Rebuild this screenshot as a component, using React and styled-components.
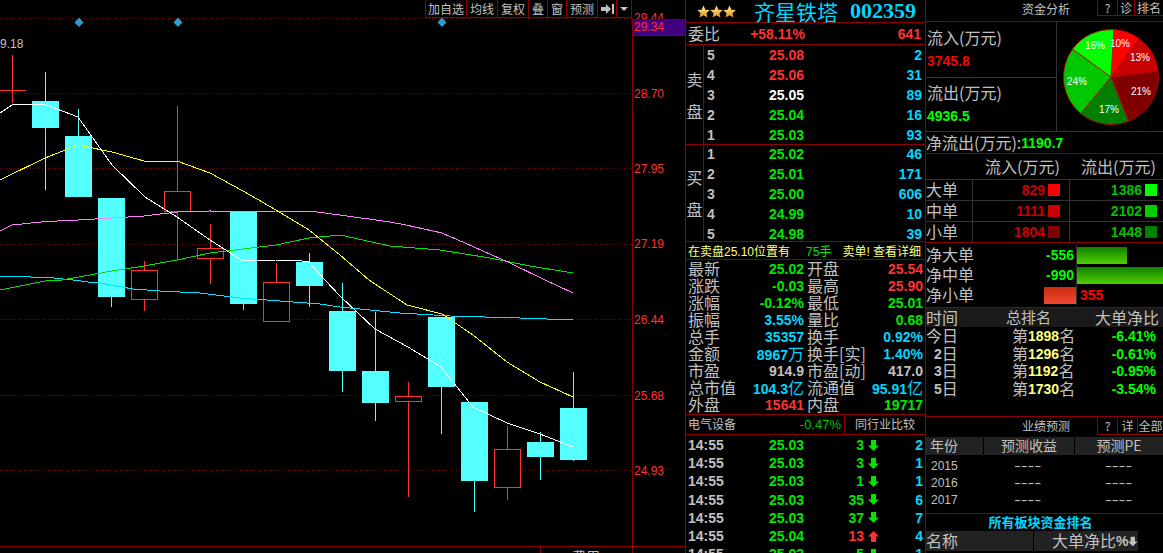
import React from "react";
import styled, { createGlobalStyle } from "styled-components";

const RED_LINE = "#8b0000";
const DIM_LINE = "#333333";
const GRAY = "#c0c0c0";
const COLORS = { red: "#ff3232", green: "#00e600", cyan: "#00d7ff", white: "#ffffff", gray: "#c0c0c0", pure: "#00ff00", yellow: "#ffff80", deep: "#cc0000", mid: "#00c000", bright: "#ff0000" };

const Global = createGlobalStyle`
  html, body { margin: 0; padding: 0; background: #000; }
  body { font-family: "Liberation Sans", "Noto Sans CJK SC", sans-serif; color: ${GRAY}; }
`;
const Page = styled.div`display:flex;width:1163px;height:553px;overflow:hidden;background:#000;`;
const ChartColumn = styled.div`position:relative;width:685px;flex:none;border-right:1px solid ${RED_LINE};display:flex;flex-direction:column;`;
const ChartSvg = styled.svg`display:block;flex:none;polyline,rect,line{shape-rendering:crispEdges;}`;
const Strip = styled.div`display:flex;height:6px;border-top:1px solid ${RED_LINE};overflow:hidden;flex:none;`;
const StripCell = styled.div`width:${p => p.$w}px;flex:none;border-right:1px solid ${RED_LINE};box-sizing:border-box;padding:2px 0 0 ${p => p.$pad || 0}px;font-size:14px;line-height:16px;color:${GRAY};white-space:nowrap;`;
const Toolbar = styled.div`position:absolute;top:0;left:425px;height:17px;display:flex;border:1px solid ${RED_LINE};border-top:0;`;
const ToolButton = styled.div`width:${p => p.$w}px;box-sizing:border-box;border-right:1px solid ${RED_LINE};font-size:12px;line-height:16px;text-align:center;color:${GRAY};display:flex;align-items:center;justify-content:center;white-space:nowrap;font-family:"Noto Sans CJK SC",sans-serif;&:last-child{border-right:0;}`;
const PriceTag = styled.div`position:absolute;left:633px;top:19px;width:52px;height:17px;box-sizing:border-box;background:#400080;border-bottom:1px solid ${RED_LINE};color:#ff3232;font-size:12px;line-height:17px;padding-left:1px;`;

const Mid = styled.div`width:239px;flex:none;border-right:1px solid ${RED_LINE};display:flex;flex-direction:column;overflow:hidden;`;
const Section = styled.div`height:${p => p.$h}px;flex:none;box-sizing:content-box;border-bottom:1px solid ${RED_LINE};`;
const TitleBar = styled(Section)`display:flex;align-items:center;padding-left:11px;`;
const Stars = styled.div`display:flex;width:57px;flex:none;`;
const Title = styled.div`font-size:22px;font-weight:700;color:#00d7ff;font-family:"Liberation Serif","Noto Sans CJK SC",serif;white-space:nowrap;line-height:22px;display:flex;gap:12px;`;
const TitleName = styled.span`font-family:"Noto Sans CJK SC",sans-serif;font-weight:400;font-size:21px;`;
const Unit = styled.span`font-family:"Noto Sans CJK SC",sans-serif;font-weight:400;font-size:16px;`;
const Ratio = styled(Section)`display:flex;align-items:center;padding:0 4px 0 2px;`;
const Label = styled.span`font-size:${p => p.$s || 16}px;font-weight:400;color:${GRAY};white-space:nowrap;font-family:"Noto Sans CJK SC",sans-serif;line-height:16px;margin-top:-2px;`;
const Num = styled.span`font-size:14px;font-weight:700;color:${p => COLORS[p.$c] || GRAY};white-space:nowrap;line-height:16px;`;
const RatioValue = styled(Num)`width:85px;text-align:right;`;
const RatioEnd = styled(Num)`margin-left:auto;`;
const Book = styled(Section)`display:flex;`;
const SideLabel = styled.div`width:17px;flex:none;border-right:1px solid ${RED_LINE};display:flex;flex-direction:column;align-items:center;justify-content:center;gap:16px;font-size:16px;font-family:"Noto Sans CJK SC",sans-serif;line-height:16px;`;
const BookRows = styled.div`flex:1;margin-top:${p => p.$top || 0}px;`;
const BookRow = styled.div`height:20px;display:flex;align-items:center;padding-right:3px;`;
const Level = styled(Num)`width:20px;padding-left:3px;box-sizing:border-box;flex:none;`;
const Price = styled(Num)`width:80px;text-align:right;flex:none;`;
const Volume = styled(Num)`margin-left:auto;`;
const Notice = styled(Section)`display:flex;align-items:center;padding-left:2px;font-size:12px;color:#ffff80;white-space:nowrap;font-family:"Liberation Sans","Noto Sans CJK SC",sans-serif;`;
const NoticeGreen = styled.span`color:#00e600;margin-left:16px;`;
const NoticeEnd = styled.span`margin-left:11px;`;
const Stats = styled(Section)`display:flex;flex-direction:column;`;
const StatRow = styled.div`height:17px;display:grid;grid-template-columns:116px 116px;column-gap:3px;padding-left:2px;align-items:center;`;
const StatCell = styled.div`display:flex;justify-content:space-between;align-items:center;`;
const Industry = styled(Section)`display:flex;align-items:center;`;
const IndustryLeft = styled.div`width:159px;box-sizing:border-box;height:100%;border-right:1px solid ${RED_LINE};display:flex;align-items:center;justify-content:space-between;padding:0 3px 0 2px;`;
const IndustryDelta = styled.span`font-size:13px;color:#00c000;`;
const IndustryRight = styled.div`flex:1;display:flex;justify-content:center;align-items:center;`;
const TradeList = styled.div`padding-top:1px;`;
const TradeRow = styled.div`height:18.2px;display:flex;align-items:center;padding-left:2px;`;
const TradeTime = styled(Num)`width:40px;flex:none;`;
const TradePrice = styled(Num)`width:76px;text-align:right;flex:none;`;
const TradeVol = styled(Num)`width:60px;text-align:right;flex:none;`;
const TradeArrow = styled.svg`margin-left:4px;flex:none;`;
const TradeCount = styled(Num)`margin-left:auto;padding-right:2px;`;

const Right = styled.div`flex:1;min-width:0;display:flex;flex-direction:column;overflow:hidden;`;
const PanelHead = styled.div`height:${p => p.$h}px;flex:none;border-bottom:1px solid ${RED_LINE};display:flex;justify-content:flex-end;position:relative;`;
const PanelTitle = styled.div`position:absolute;left:96px;top:0;line-height:${p => p.$h}px;font-size:12px;color:${GRAY};font-family:"Noto Sans CJK SC",sans-serif;`;
const PanelButtons = styled.div`display:flex;height:${p => p.$h}px;border-left:1px solid ${RED_LINE};border-bottom:1px solid ${RED_LINE};box-sizing:border-box;`;
const PanelButton = styled.div`width:${p => p.$w}px;box-sizing:border-box;border-right:1px solid ${RED_LINE};font-size:12px;display:flex;align-items:center;justify-content:center;white-space:nowrap;font-family:"Noto Sans CJK SC",sans-serif;overflow:hidden;&:last-child{border-right:0;}`;
const FlowTop = styled.div`height:109px;flex:none;display:flex;border-bottom:1px solid ${DIM_LINE};`;
const FlowLeft = styled.div`width:130px;flex:none;border-right:1px solid ${DIM_LINE};display:flex;flex-direction:column;`;
const FlowBlock = styled.div`flex:1;padding:9px 0 0 1px;display:flex;flex-direction:column;gap:8px;& + &{border-top:1px solid ${DIM_LINE};padding-top:8px;}`;
const PieWrap = styled.div`flex:1;display:flex;align-items:center;padding-left:5px;`;
const NetOut = styled.div`height:21px;flex:none;display:flex;align-items:center;border-bottom:1px solid ${RED_LINE};`;
const FlowHead = styled.div`height:25px;flex:none;display:grid;grid-template-columns:59px 96px 1fr;align-items:center;border-bottom:1px solid ${DIM_LINE};`;
const FlowRow = styled.div`height:20px;flex:none;display:grid;grid-template-columns:47px 97px 1fr;border-bottom:1px solid ${p => p.$last ? RED_LINE : DIM_LINE};align-items:stretch;`;
const FlowCell = styled.div`display:flex;align-items:center;justify-content:${p => p.$end ? "flex-end" : "flex-start"};gap:2px;border-right:1px solid ${p => p.$nb ? "transparent" : DIM_LINE};padding-right:${p => p.$pr || 0}px;`;
const Swatch = styled.i`display:block;width:12px;height:12px;background:${p => p.$c};`;
const FlowNum = styled(Num)`color:${p => p.$col};margin-right:1px;`;
const Net = styled.div`height:64px;flex:none;border-bottom:1px solid ${RED_LINE};display:flex;flex-direction:column;`;
const NetRow = styled.div`height:20px;display:grid;grid-template-columns:150px 1fr;margin-top:${p => p.$top || 0}px;`;
const NetLeft = styled.div`display:flex;align-items:center;`;
const NetValue = styled(Num)`margin-left:auto;padding-right:2px;color:#00ff00;`;
const NetRight = styled.div`border-left:1px solid ${DIM_LINE};display:flex;align-items:center;`;
const Bar = styled.div`height:17px;width:${p => p.$w}px;background:${p => p.$red ? "linear-gradient(#c82a10,#f04a30)" : "linear-gradient(#108000,#50d000)"};flex:none;margin-left:${p => p.$auto ? "auto" : "0"};`;
const NetExtra = styled(Num)`color:#ff0000;margin-left:3px;`;
const RankHead = styled.div`height:19px;flex:none;background:#1a1a1a;display:grid;grid-template-columns:80px 89px 1fr;align-items:center;`;
const Rank = styled.div`height:89px;flex:none;border-bottom:1px solid ${RED_LINE};`;
const RankRow = styled.div`height:17.8px;display:grid;grid-template-columns:86px 63px 81px;align-items:center;`;
const RankDay = styled.div`padding-left:${p => p.$pad || 0}px;display:flex;align-items:center;`;
const RankPos = styled.div`display:flex;align-items:center;`;
const Pct = styled(Num)`text-align:right;color:#00ff00;`;
const Forecast = styled.div`height:17px;flex:none;position:relative;display:flex;justify-content:flex-end;`;
const GreyTable = styled.div`display:grid;grid-template-columns:${p => p.$cols};gap:1px;margin-top:${p => p.$top || 0}px;flex:none;height:${p => p.$h}px;`;
const GreyCell = styled.div`background:#222;display:flex;align-items:center;justify-content:${p => p.$left ? "flex-start" : "center"};padding-left:${p => p.$pad || 0}px;`;
const ForecastRows = styled.div`height:59px;flex:none;border-bottom:1px solid ${RED_LINE};padding-top:2px;box-sizing:border-box;`;
const ForecastRow = styled.div`height:17px;display:grid;grid-template-columns:83px 91px 1fr;padding-left:5px;align-items:center;font-size:12px;color:${GRAY};`;
const Dashes = styled.span`display:inline-block;transform:scaleX(1.7);transform-origin:left center;`;
const AllTitle = styled.div`height:17px;flex:none;text-align:center;padding-right:8px;font-size:13px;line-height:15px;font-weight:700;color:#00d7ff;font-family:"Noto Sans CJK SC",sans-serif;`;

const candles = [
  { x: 45, t: 72, b: 190, y: 101, h: 27, k: "c" }, { x: 78, t: 109, b: 136, y: 136, h: 61, k: "c" },
  { x: 111, t: 198, b: 307, y: 198, h: 99, k: "c" }, { x: 144, t: 261, b: 311, y: 270, h: 29, k: "r" },
  { x: 177, t: 106, b: 259, y: 191, h: 20, k: "r" }, { x: 210, t: 224, b: 284, y: 248, h: 10, k: "r" },
  { x: 243, t: 212, b: 310, y: 212, h: 92, k: "c" }, { x: 276, t: 263, b: 321, y: 282, h: 39, k: "r" },
  { x: 309, t: 253, b: 307, y: 262, h: 24, k: "c" }, { x: 342, t: 283, b: 392, y: 311, h: 60, k: "c" },
  { x: 375, t: 312, b: 421, y: 371, h: 32, k: "c" }, { x: 408, t: 382, b: 497, y: 396, h: 5, k: "r" },
  { x: 441, t: 317, b: 434, y: 317, h: 70, k: "c" }, { x: 474, t: 402, b: 512, y: 402, h: 79, k: "c" },
  { x: 507, t: 426, b: 500, y: 449, h: 38, k: "r" }, { x: 540, t: 432, b: 480, y: 442, h: 15, k: "c" },
  { x: 573, t: 372, b: 461, y: 408, h: 52, k: "c" },
];
const lines = [
  ["#00e5ff", "0,276 50,277.6 73,280 88,282 100,283 133,289 160,291 200,293 240,298 280,301 320,304 340,307 400,313 450,316 520,318 573,320"],
  ["#00e600", "0,290 50,280 62,280 112,271 144,266 177,260 210,253 243,249 276,245 309,238 340,235 390,246 440,250 490,258 530,266 573,273"],
  ["#ff80ff", "0,231 12,225 45,221.6 78,220 112,218 144,216 177,212 210,211 243,212 276,211 309,211 340,215 390,222 406,225 442,233 465,243 510,263 545,280 573,293"],
  ["#ffff00", "0,180 45,158 78,145 112,152 144,161 177,161 210,173 243,191 276,210 309,230 340,255 369,280 407,305 442,314 473,335 507,362 540,382 573,397"],
  ["#ffffff", "0,113 12,105 45,104.5 78,117 112,165 145,197 177,217 210,240 243,261 276,260 294,260 309,262 325,280 340,296 375,329 408,347 441,367 473,407 507,423 540,434 573,447"],
];
const gridY = [18, 93, 168, 244, 319, 395, 470];
const axis = [["29.44", 22], ["28.70", 98], ["27.95", 173], ["27.19", 248], ["26.44", 324], ["25.68", 400], ["24.93", 475]];
const diamonds = [79, 178, 442];

function Chart() {
  return (
    <ChartSvg width="685" height="546" viewBox="0 0 685 546">
      {gridY.map(y => <line key={y} x1="0" x2="632" y1={y + 0.5} y2={y + 0.5} stroke="#800000" strokeDasharray="1 2" />)}
      <line x1="632.5" x2="632.5" y1="18" y2="546" stroke={RED_LINE} />
      {diamonds.map(x => <polygon key={x} points={`${x},17.5 ${x + 4.5},22.5 ${x},27 ${x - 4.5},22.5`} fill="#3399cc" />)}
      <text x="0" y="48" fontSize="12" fill={GRAY}>9.18</text>
      <line x1="12.5" x2="12.5" y1="55" y2="103" stroke="#ff3232" />
      <line x1="0" x2="26" y1="90.5" y2="90.5" stroke="#ff3232" />
      {candles.map(c => {
        const col = c.k === "c" ? "#54ffff" : "#ff3232";
        return (
          <g key={c.x}>
            <line x1={c.x + 0.5} x2={c.x + 0.5} y1={c.t} y2={c.b} stroke={col} />
            <rect x={c.x - 13} y={c.y} width="27" height={c.k === "c" ? c.h : c.h + 1} fill={col} />
            {c.k === "r" && <rect x={c.x - 12} y={c.y + 1} width="25" height={c.h - 1} fill="#000" />}
          </g>
        );
      })}
      {lines.map(([c, p]) => <polyline key={c} points={p} fill="none" stroke={c} strokeWidth="1" />)}
      {axis.map(([t, y]) => <text key={t} x="634" y={y} fontSize="12" fill="#ff3232">{t}</text>)}
    </ChartSvg>
  );
}

const Star = () => (
  <svg width="13" height="13" viewBox="0 0 24 24"><defs><linearGradient id="st" x1="0" y1="0" x2="0" y2="1"><stop offset="0" stopColor="#ffe9a0" /><stop offset="1" stopColor="#e09a20" /></linearGradient></defs><polygon points="12,1 15.5,8.6 23.5,9.4 17.5,15 19.2,23 12,18.8 4.8,23 6.5,15 .5,9.4 8.5,8.6" fill="url(#st)" /></svg>
);
const Arrow = ({ up: isUp, c = "#00e600" }) => (
  <TradeArrow width="11" height="11" viewBox="0 0 11 11">
    <polygon fill={c} points={isUp ? "5.5,0 11,5.5 8,5.5 8,11 3,11 3,5.5 0,5.5" : "3,0 8,0 8,5.5 11,5.5 5.5,11 0,5.5 3,5.5"} />
  </TradeArrow>
);

const sell = [[5, "25.08", "red", 2], [4, "25.06", "red", 31], [3, "25.05", "white", 89], [2, "25.04", "green", 16], [1, "25.03", "green", 93]];
const buy = [[1, "25.02", 46], [2, "25.01", 171], [3, "25.00", 606], [4, "24.99", 10], [5, "24.98", 39]];
const stats = [
  ["最新", "25.02", "green", "开盘", "25.54", "red"], ["涨跌", "-0.03", "green", "最高", "25.90", "red"],
  ["涨幅", "-0.12%", "green", "最低", "25.01", "green"], ["振幅", "3.55%", "cyan", "量比", "0.68", "green"],
  ["总手", "35357", "cyan", "换手", "0.92%", "cyan"], ["金额", "8967|万", "cyan", "换手[实]", "1.40%", "cyan"],
  ["市盈", "914.9", "gray", "市盈[动]", "417.0", "gray"], ["总市值", "104.3|亿", "cyan", "流通值", "95.91|亿", "cyan"],
  ["外盘", "15641", "red", "内盘", "19717", "green"],
];
const trades = [["25.03", 3, 2, 0], ["25.03", 3, 1, 0], ["25.03", 1, 1, 0], ["25.03", 35, 6, 0], ["25.03", 37, 7, 0], ["25.04", 13, 4, 1], ["25.03", 5, 1, 0]];

const Val = ({ v, c }) => {
  const [n, u] = v.split("|");
  return <Num $c={c}>{n}{u && <Unit>{u}</Unit>}</Num>;
};

const R = Math.PI / 180;
const slices = [[10, "#ff0000"], [13, "#c80000"], [21, "#800000"], [17, "#008000"], [24, "#00c800"], [16, "#00ff00"]];
const pieLabels = [["10%", 58, 15.5], ["13%", 78, 29.5], ["21%", 79, 63.5], ["17%", 47, 81.5], ["24%", 15, 53.5], ["16%", 33, 17.5]];
function Pie() {
  let a = 0;
  const cx = 49, cy = 49, r = 47.5;
  return (
    <svg width="98" height="98" viewBox="0 0 98 98">
      {slices.map(([p, c]) => {
        const s = a; a += p * 3.6;
        const x1 = cx + r * Math.sin(s * R), y1 = cy - r * Math.cos(s * R);
        const x2 = cx + r * Math.sin(a * R), y2 = cy - r * Math.cos(a * R);
        return <path key={c} d={`M${cx} ${cy}L${x1} ${y1}A${r} ${r} 0 0 1 ${x2} ${y2}Z`} fill={c} stroke="#c80000" strokeWidth=".8" />;
      })}
      {pieLabels.map(([t, x, y]) => <text key={t} x={x} y={y} fontSize="10" fill="#fff" textAnchor="middle" dominantBaseline="central">{t}</text>)}
    </svg>
  );
}

export default function App() {
  return (
    <Page>
      <Global />
      <ChartColumn>
        <Chart />
        <Strip>
          <StripCell $w={541}></StripCell>
          <StripCell $w={92} $pad={31}>费用</StripCell>
        </Strip>
        <PriceTag>29.34</PriceTag>
        <Toolbar>
          {[["加自选", 41], ["均线", 31], ["复权", 31], ["叠", 19], ["窗", 19], ["预测", 31]].map(([t, w]) => <ToolButton key={t} $w={w}>{t}</ToolButton>)}
          <ToolButton $w={19}><svg width="13" height="10" viewBox="0 0 13 10"><polygon points="0,3 5,3 5,0 10,5 5,10 5,7 0,7" fill={GRAY} /><rect x="11" y="0" width="2" height="10" fill={GRAY} /></svg></ToolButton>
          <ToolButton $w={14}><svg width="8" height="4" viewBox="0 0 8 4"><polygon points="0,0 8,0 4,4" fill={GRAY} /></svg></ToolButton>
        </Toolbar>
      </ChartColumn>

      <Mid>
        <TitleBar $h={22}>
          <Stars><Star /><Star /><Star /></Stars>
          <Title><TitleName>齐星铁塔</TitleName><span>002359</span></Title>
        </TitleBar>
        <Ratio $h={21}>
          <Label>委比</Label>
          <RatioValue $c="red">+58.11%</RatioValue>
          <RatioEnd $c="red">641</RatioEnd>
        </Ratio>
        <Book $h={99}>
          <SideLabel><span>卖</span><span>盘</span></SideLabel>
          <BookRows>
            {sell.map(([l, p, c, v]) => <BookRow key={l}><Level>{l}</Level><Price $c={c}>{p}</Price><Volume $c="cyan">{v}</Volume></BookRow>)}
          </BookRows>
        </Book>
        <Book $h={96}>
          <SideLabel><span>买</span><span>盘</span></SideLabel>
          <BookRows $top={-1}>
            {buy.map(([l, p, v]) => <BookRow key={l}><Level>{l}</Level><Price $c="green">{p}</Price><Volume $c="cyan">{v}</Volume></BookRow>)}
          </BookRows>
        </Book>
        <Notice $h={17}>
          在卖盘25.10位置有<NoticeGreen>75手</NoticeGreen><NoticeEnd>卖单! 查看详细</NoticeEnd>
        </Notice>
        <Stats $h={154}>
          {stats.map(([a, b, c, d, e, f]) => (
            <StatRow key={a}>
              <StatCell><Label>{a}</Label><Val v={b} c={c} /></StatCell>
              <StatCell><Label>{d}</Label><Val v={e} c={f} /></StatCell>
            </StatRow>
          ))}
        </Stats>
        <Industry $h={19}>
          <IndustryLeft><Label $s={12}>电气设备</Label><IndustryDelta>-0.47%</IndustryDelta></IndustryLeft>
          <IndustryRight><Label $s={12}>同行业比较</Label></IndustryRight>
        </Industry>
        <TradeList>
          {trades.map(([p, v, n, isUp], i) => (
            <TradeRow key={i}>
              <TradeTime>14:55</TradeTime>
              <TradePrice $c="green">{p}</TradePrice>
              <TradeVol $c={isUp ? "red" : "green"}>{v}</TradeVol>
              <Arrow up={!!isUp} c={isUp ? "#ff3232" : "#00e600"} />
              <TradeCount $c="cyan">{n}</TradeCount>
            </TradeRow>
          ))}
        </TradeList>
      </Mid>

      <Right>
        <PanelHead $h={21}>
          <PanelTitle $h={17}>资金分析</PanelTitle>
          <PanelButtons $h={16}>
            <PanelButton $w={20}>?</PanelButton><PanelButton $w={17}>诊</PanelButton><PanelButton $w={28}>排名</PanelButton>
          </PanelButtons>
        </PanelHead>
        <FlowTop>
          <FlowLeft>
            <FlowBlock><Label>流入(万元)</Label><Num $c="bright">3745.8</Num></FlowBlock>
            <FlowBlock><Label>流出(万元)</Label><Num $c="pure">4936.5</Num></FlowBlock>
          </FlowLeft>
          <PieWrap><Pie /></PieWrap>
        </FlowTop>
        <NetOut><Label>净流出(万元):</Label><Num $c="pure">1190.7</Num></NetOut>
        <FlowHead><span /><Label>流入(万元)</Label><Label>流出(万元)</Label></FlowHead>
        {[["大单", "829", "#ff0000", "1386", "#00ff00"], ["中单", "1111", "#c80000", "2102", "#00cc00"], ["小单", "1804", "#800000", "1448", "#008000"]].map(([l, a, ca, b, cb], i) => (
          <FlowRow key={l} $last={i === 2}>
            <FlowCell><Label>{l}</Label></FlowCell>
            <FlowCell $end $pr={9}><FlowNum $col="#cc0000">{a}</FlowNum><Swatch $c={ca} /></FlowCell>
            <FlowCell $end $nb $pr={5}><FlowNum $col="#00c000">{b}</FlowNum><Swatch $c={cb} /></FlowCell>
          </FlowRow>
        ))}
        <Net>
          <NetRow $top={2}><NetLeft><Label>净大单</Label><NetValue>-556</NetValue></NetLeft><NetRight><Bar $w={50} /></NetRight></NetRow>
          <NetRow><NetLeft><Label>净中单</Label><NetValue>-990</NetValue></NetLeft><NetRight><Bar $w={87} /></NetRight></NetRow>
          <NetRow><NetLeft><Label>净小单</Label><Bar $red $auto $w={32} /></NetLeft><NetRight><NetExtra>355</NetExtra></NetRight></NetRow>
        </Net>
        <RankHead><Label>时间</Label><Label $s={15}>总排名</Label><Label>大单净比</Label></RankHead>
        <Rank>
          {[["今", "1898", "-6.41%"], ["2", "1296", "-0.61%"], ["3", "1192", "-0.95%"], ["5", "1730", "-3.54%"]].map(([d, n, p]) => (
            <RankRow key={d}>
              <RankDay $pad={d === "今" ? 0 : 8}>{d === "今" ? <Label>今</Label> : <Num>{d}</Num>}<Label>日</Label></RankDay>
              <RankPos><Label>第</Label><Num $c="yellow">{n}</Num><Label>名</Label></RankPos>
              <Pct>{p}</Pct>
            </RankRow>
          ))}
        </Rank>
        <Forecast>
          <PanelTitle $h={17}>业绩预测</PanelTitle>
          <PanelButtons $h={18}>
            <PanelButton $w={20}>?</PanelButton><PanelButton $w={20}>详</PanelButton><PanelButton $w={25}>全部</PanelButton>
          </PanelButtons>
        </Forecast>
        <GreyTable $cols="57px 90px 1fr" $top={3} $h={18}>
          <GreyCell $left $pad={4}><Label $s={14}>年份</Label></GreyCell>
          <GreyCell><Label $s={14}>预测收益</Label></GreyCell>
          <GreyCell><Label $s={14}>预测PE</Label></GreyCell>
        </GreyTable>
        <ForecastRows>
          {["2015", "2016", "2017"].map(y => <ForecastRow key={y}><span>{y}</span><span><Dashes>----</Dashes></span><span><Dashes>----</Dashes></span></ForecastRow>)}
        </ForecastRows>
        <AllTitle>所有板块资金排名</AllTitle>
        <GreyTable $cols="107px 104px" $h={20}>
          <GreyCell $left><Label>名称</Label></GreyCell>
          <GreyCell $left $pad={18}><Label>大单净比</Label><Num>%</Num><svg width="11" height="11" viewBox="0 0 11 11"><polygon fill={GRAY} points="3,0 8,0 8,5.5 11,5.5 5.5,11 0,5.5 3,5.5" /></svg></GreyCell>
        </GreyTable>
      </Right>
    </Page>
  );
}
